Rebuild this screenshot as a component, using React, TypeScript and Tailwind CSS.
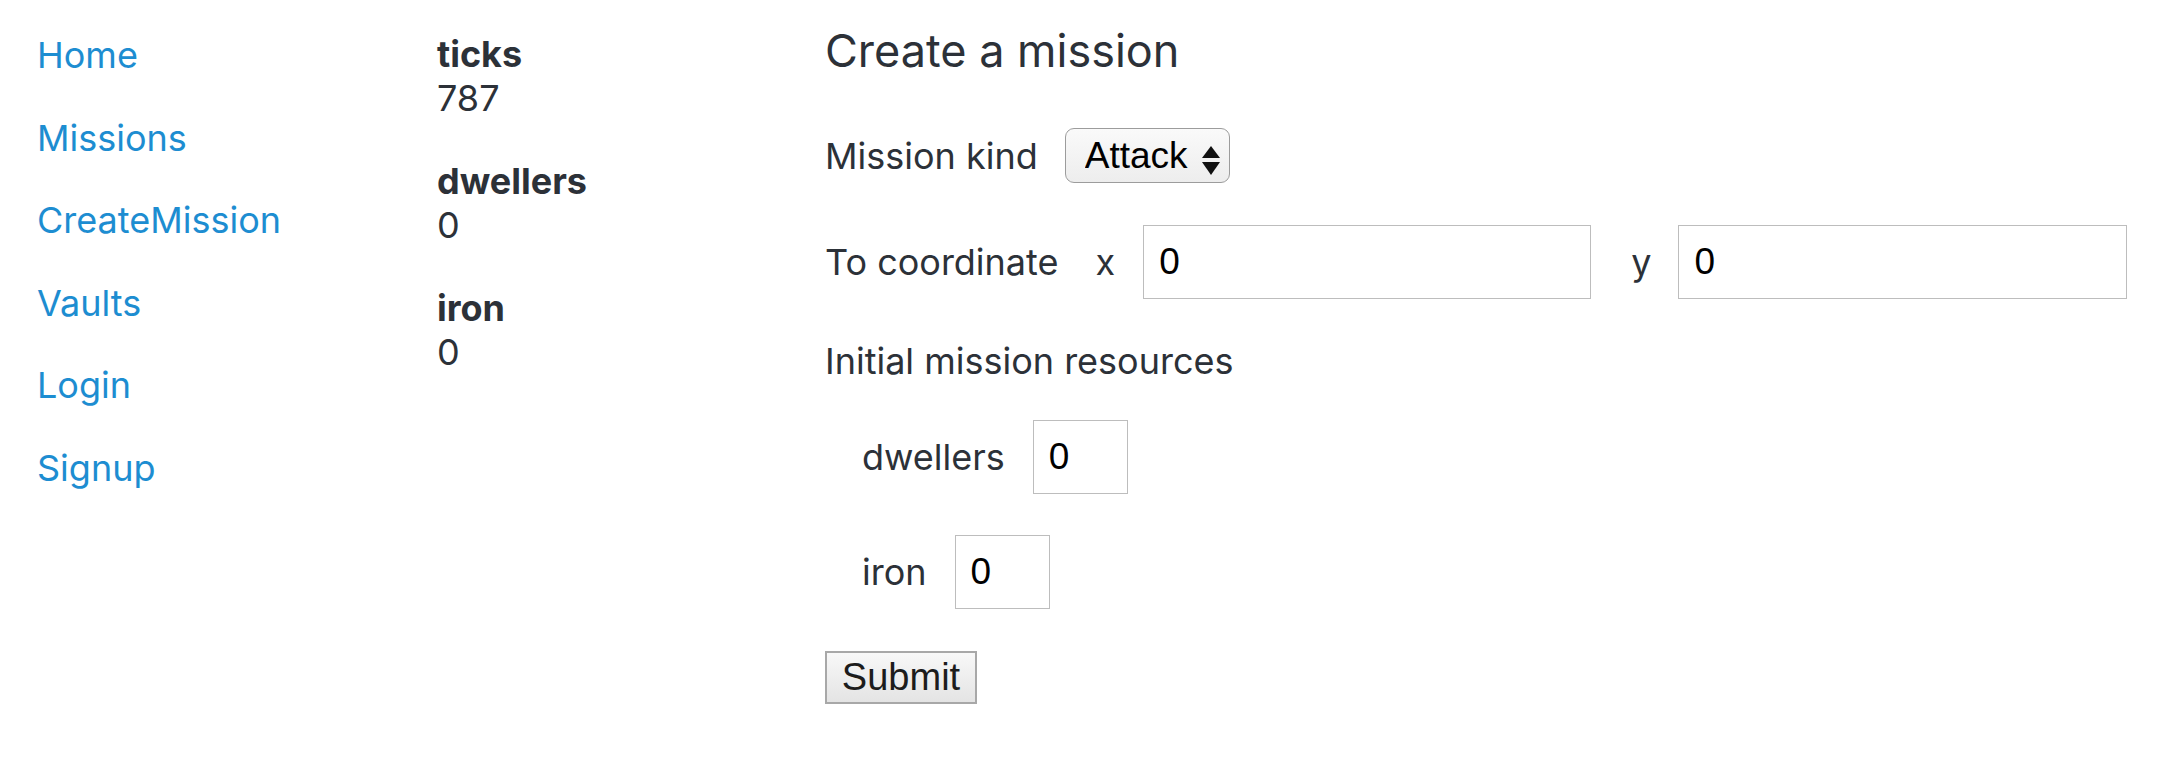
import React from "react";

const NAV = ["Home", "Missions", "CreateMission", "Vaults", "Login", "Signup"];

const STATS = [
  { name: "ticks", value: 787 },
  { name: "dwellers", value: 0 },
  { name: "iron", value: 0 },
];

const inputCls =
  "h-[74px] border border-[#bdbdbd] bg-white pl-[15px] text-[37px] text-black font-['Liberation_Sans',Arial,sans-serif] outline-none";

const SelectBox = () => (
  <div className="relative w-[165px] h-[55px]">
    <select
      defaultValue="Attack"
      className="appearance-none w-full h-full rounded-[9px] border-[1.5px] border-[#9c9c9c] bg-gradient-to-b from-[#fafafa] to-[#ededed] pl-[19px] text-[37px] leading-[53px] text-black font-['Liberation_Sans',Arial,sans-serif] outline-none"
    >
      <option>Attack</option>
      <option>Explore</option>
    </select>
    <svg
      className="absolute left-[137px] top-[18px] pointer-events-none"
      width="18"
      height="29"
      viewBox="0 0 18 29"
    >
      <polygon points="9,0 18,12 0,12" fill="#111" />
      <polygon points="0,16 18,16 9,29" fill="#111" />
    </svg>
  </div>
);

export default function App() {
  return (
    <div className="flex min-h-[782px] bg-white text-[#2c3138] font-['Inter',sans-serif]">
      <nav className="w-[437px] shrink-0 pl-[37px] pt-[33px] flex flex-col gap-[38px]">
        {NAV.map((n) => (
          <a
            key={n}
            href="#"
            className="text-[36px] leading-[44.5px] text-[#1d8dd1]"
          >
            {n}
          </a>
        ))}
      </nav>

      <div className="w-[388px] shrink-0 pt-[32px] flex flex-col gap-[39px]">
        {STATS.map((s) => (
          <div key={s.name} className="text-[36px] leading-[44px]">
            <div className="font-bold">{s.name}</div>
            <div>{s.value}</div>
          </div>
        ))}
      </div>

      <main className="flex-1 pt-[24px] text-[36px] leading-[44px]">
        <h1 className="text-[45px] leading-[54px] font-normal">Create a mission</h1>

        <div className="mt-[50px] flex items-center">
          <span className="mr-[27px]">Mission kind</span>
          <SelectBox />
        </div>

        <div className="mt-[42px] flex items-center">
          <span>To coordinate</span>
          <span className="ml-[37px] mr-[28px]">x</span>
          <input className={`${inputCls} w-[448px]`} defaultValue="0" />
          <span className="ml-[40px] mr-[27px]">y</span>
          <input className={`${inputCls} w-[449px]`} defaultValue="0" />
        </div>

        <div className="mt-[40px]">Initial mission resources</div>

        <div className="mt-[37px] pl-[37px] flex items-center">
          <span className="mr-[28px]">dwellers</span>
          <input className={`${inputCls} w-[95px]`} defaultValue="0" />
        </div>

        <div className="mt-[41px] pl-[37px] flex items-center">
          <span className="mr-[28px]">iron</span>
          <input className={`${inputCls} w-[95px]`} defaultValue="0" />
        </div>

        <button
          type="button"
          className="mt-[42px] w-[152px] h-[53px] border-2 border-[#a8a8a8] bg-gradient-to-b from-[#f8f8f8] to-[#e4e4e4] text-[38px] leading-[49px] text-[#1c1c1c] font-['Liberation_Sans',Arial,sans-serif]"
        >
          Submit
        </button>
      </main>
    </div>
  );
}
